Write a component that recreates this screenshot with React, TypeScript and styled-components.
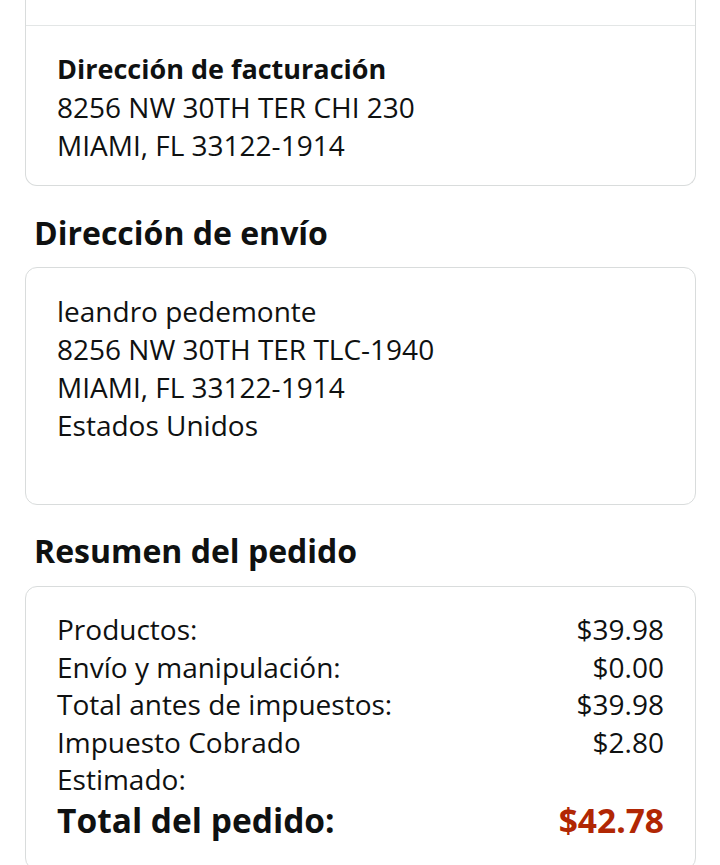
import React from "react";
import styled, { createGlobalStyle } from "styled-components";

const Global = createGlobalStyle`
  html, body { margin: 0; padding: 0; background: #ffffff; }
  body { font-family: "Open Sans", "Noto Sans", sans-serif; color: #0f1111; }
`;

const Page = styled.div`
  width: 720px;
  height: 865px;
  overflow: hidden;
  padding: 0 24px 0 25px;
  box-sizing: border-box;
`;

const Card = styled.div<{ $open?: boolean }>`
  border: 1px solid #d9dcdc;
  border-radius: 12px;
  ${(p) => (p.$open ? "border-top: none; border-top-left-radius: 0; border-top-right-radius: 0;" : "")}
  background: #fff;
  box-sizing: border-box;
`;

const TopStrip = styled.div`
  height: 25px;
  border-bottom: 1px solid #e3e6e6;
`;

const CardBody = styled.div<{ $pt: number; $pb: number }>`
  padding: ${(p) => p.$pt}px 31px ${(p) => p.$pb}px 31px;
`;

const Line = styled.div<{ $bold?: boolean }>`
  font-size: ${(p) => (p.$bold ? 27 : 28)}px;
  line-height: 38px;
  font-weight: ${(p) => (p.$bold ? 700 : 400)};
  white-space: nowrap;
`;

const Heading = styled.h2<{ $mt: number; $mb: number }>`
  margin: ${(p) => p.$mt}px 0 ${(p) => p.$mb}px 9px;
  font-size: 32px;
  line-height: 40px;
  font-weight: 700;
  color: #0f1111;
`;

const Row = styled.div`
  display: flex;
  justify-content: space-between;
  font-size: 28px;
  line-height: 37.5px;
  white-space: nowrap;
`;

const TotalRow = styled.div`
  display: flex;
  justify-content: space-between;
  font-size: 33.5px;
  line-height: 46px;
  font-weight: 700;
  margin-top: -2px;
`;

const Price = styled.span`
  color: #b12704;
`;

const rows: [string, string][] = [
  ["Productos:", "$39.98"],
  ["Envío y manipulación:", "$0.00"],
  ["Total antes de impuestos:", "$39.98"],
  ["Impuesto Cobrado", "$2.80"],
  ["Estimado:", ""],
];

export default function App() {
  return (
    <>
      <Global />
      <Page>
        <Card $open>
          <TopStrip />
          <CardBody $pt={24} $pb={21}>
            <Line $bold>Dirección de facturación</Line>
            <Line>8256 NW 30TH TER CHI 230</Line>
            <Line>MIAMI, FL 33122-1914</Line>
          </CardBody>
        </Card>
        <Heading $mt={27} $mb={14}>Dirección de envío</Heading>
        <Card>
          <CardBody $pt={24} $pb={60}>
            <Line>leandro pedemonte</Line>
            <Line>8256 NW 30TH TER TLC-1940</Line>
            <Line>MIAMI, FL 33122-1914</Line>
            <Line>Estados Unidos</Line>
          </CardBody>
        </Card>
        <Heading $mt={26} $mb={15}>Resumen del pedido</Heading>
        <Card>
          <CardBody $pt={24} $pb={26}>
            {rows.map(([l, v]) => (
              <Row key={l}>
                <span>{l}</span>
                <span>{v}</span>
              </Row>
            ))}
            <TotalRow>
              <span>Total del pedido:</span>
              <Price>$42.78</Price>
            </TotalRow>
          </CardBody>
        </Card>
      </Page>
    </>
  );
}
